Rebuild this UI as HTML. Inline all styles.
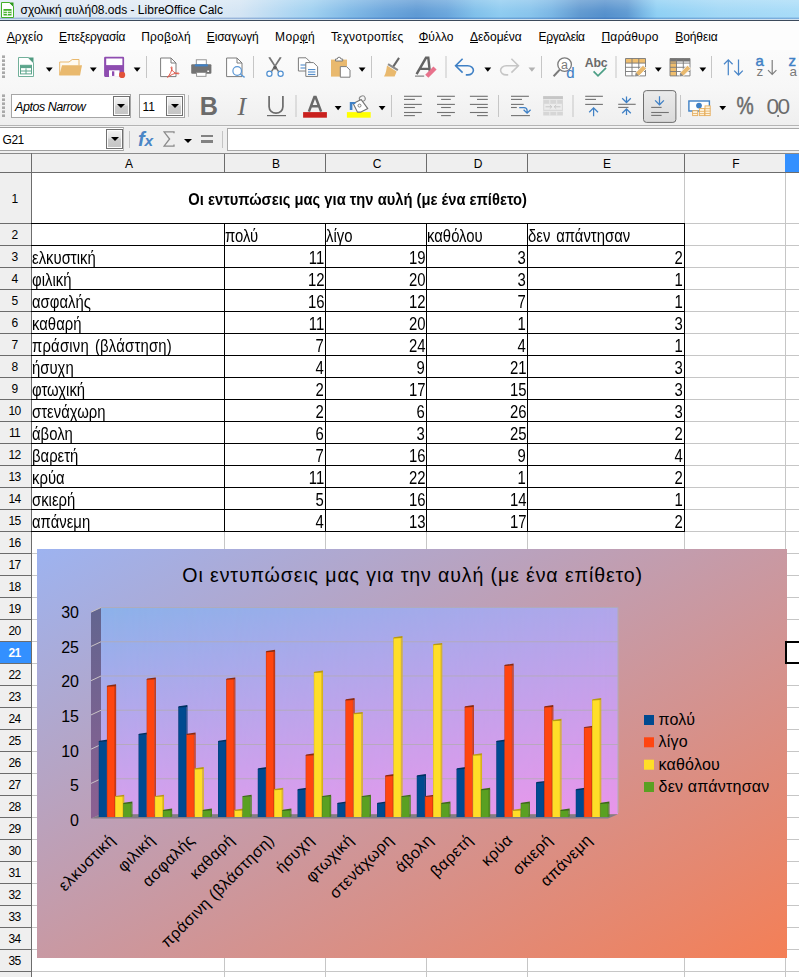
<!DOCTYPE html><html lang="el"><head><meta charset="utf-8"><title>σχολική αυλή08.ods - LibreOffice Calc</title>
<style>

html,body{margin:0;padding:0}
body{width:799px;height:977px;overflow:hidden;position:relative;background:#fff;font-family:"Liberation Sans", sans-serif;font-size:12px;color:#000}
.abs{position:absolute}
#titlebar{left:0;top:0;width:799px;height:21px;
 background:
  linear-gradient(180deg,rgba(255,255,255,.22) 0,rgba(255,255,255,.05) 45%,rgba(255,255,255,0) 70%,rgba(40,90,170,.0) 80%,rgba(40,90,170,.35) 88%,rgba(40,90,170,.35) 100%),
  linear-gradient(90deg,#dde8f3 0,#e1ebf5 180px,#d4e5f4 240px,#aed6f2 290px,#9fd0f0 312px,#80b9e6 350px,#6ba6dc 385px,#5f9ad4 417px,#6aa6dc 447px,#80c0ea 475px,#8ecbf0 500px,#88c4ec 530px,#7ab6e4 552px,#6099d0 580px,#5590cc 605px,#5f9ad2 627px,#7cbce8 645px,#8fd0f4 657px,#a2d8f6 720px,#a8dcf8 799px);}
#titlebar .edge{left:0;top:19px;width:799px;height:1px;background:#cfe0ee}
#titlebar .edge2{left:0;top:20px;width:799px;height:1px;background:#3c4a5c}
#title{left:20.5px;top:3px;font-size:12px;line-height:14px;white-space:nowrap}
#menubar{left:0;top:21px;width:799px;height:29px;background:#fdfdfd}
.mi{top:8.5px;font-size:12px;line-height:14px;white-space:nowrap}
.mi u{text-decoration:underline;text-underline-offset:1px}
#tb{left:0;top:50px;width:799px;height:75px;background:linear-gradient(180deg,#fbfbfb 0,#f7f7f7 50%,#efefef 100%)}
#tbline{left:0;top:125px;width:799px;height:1px;background:#b4b4b4}
#tbline2{left:0;top:126px;width:799px;height:1px;background:#f4f4f4}
#fbar{left:0;top:127px;width:799px;height:26px;background:#efefef}
#namebox{left:0;top:127px;width:124px;height:24px;background:#fff;border-top:1px solid #a0a0a0;border-bottom:1px solid #a0a0a0;border-right:1px solid #b8b8b8;box-sizing:border-box}
#namebox span{position:absolute;left:2.6px;top:5px;font-size:12px;line-height:14px;letter-spacing:-0.5px}
.ddb{box-sizing:border-box;border:1px solid #707070;background:linear-gradient(180deg,#f4f4f4 0,#e2e2e2 45%,#cdcdcd 50%,#c4c4c4 100%);box-shadow:inset 0 0 0 1px #fbfbfb}
.ddb i{position:absolute;left:50%;top:50%;margin:-2px 0 0 -4px;border-left:4px solid transparent;border-right:4px solid transparent;border-top:4.5px solid #000;width:0;height:0}
#finput{left:227px;top:128px;width:580px;height:23px;background:#fff;border:1px solid #a8a8a8;box-sizing:border-box}
.sep{width:1px;background:#c4c4c4}
/* sheet */
#colhdr{left:0;top:153px;width:799px;height:20px;background:#efefef;border-top:1px solid #8a8a8a;border-bottom:1px solid #6c6c6c;box-sizing:border-box}
.ch{top:155px;height:18px;line-height:18px;padding-left:1px;text-align:center;font-size:12px}
.chl{top:154px;width:1px;height:18px;background:#6c6c6c}
#rowhdr{left:0;top:173px;width:31px;height:804px;background:#efefef}
#rowhdrline{left:31px;top:153px;width:1px;height:824px;background:#6c6c6c}
.rh{left:-1px;width:31px;text-align:center;font-size:12px;line-height:14px;letter-spacing:-0.7px}
.rhl{left:0;width:31px;height:1px;background:#6c6c6c}
.gl{background:#c6c6c6}
.bl{background:#000}
.ct{white-space:nowrap;word-spacing:2px;font-size:17.5px;line-height:20px;display:inline-block}
.cl{transform:scaleX(.85);transform-origin:0 50%}
.cr{transform:scaleX(.85);transform-origin:100% 50%;text-align:right}

</style></head><body>
<div id="titlebar" class="abs"><div class="edge abs"></div><div class="edge2 abs"></div>
<svg class="abs" style="left:1px;top:2px" width="13" height="16" viewBox="0 0 13 16"><path d="M0.5 0.5H8.5L12.5 4.5V15.5H0.5Z" fill="#fff" stroke="#43b02a" stroke-width="1"/><path d="M8 0.5H12.5V5Z" fill="#2e9a1f"/><rect x="2.5" y="7" width="8" height="6.5" fill="#43b02a"/><path d="M2.5 9.3H10.5M2.5 11.4H10.5M6.4 8.8V13.5" stroke="#fff" stroke-width="0.9"/></svg>
<div id="title" class="abs">σχολική αυλή08.ods - LibreOffice Calc</div></div>
<div id="menubar" class="abs">
<div class="mi abs" style="left:6.8px;letter-spacing:0.05px"><u>Α</u>ρχείο</div>
<div class="mi abs" style="left:59.1px;letter-spacing:-0.29px"><u>Ε</u>πεξεργασία</div>
<div class="mi abs" style="left:141.2px;letter-spacing:0.22px">Προ<u>β</u>ολή</div>
<div class="mi abs" style="left:206.8px;letter-spacing:-0.17px"><u>Ε</u>ισαγωγή</div>
<div class="mi abs" style="left:275.1px;letter-spacing:0.39px">Μορ<u>φ</u>ή</div>
<div class="mi abs" style="left:330.9px;letter-spacing:0.19px">Τεχνοτροπίες</div>
<div class="mi abs" style="left:418.7px;letter-spacing:0.03px"><u>Φ</u>ύλλο</div>
<div class="mi abs" style="left:470.0px;letter-spacing:-0.02px"><u>Δ</u>εδομένα</div>
<div class="mi abs" style="left:538.5px;letter-spacing:-0.32px">Ε<u>ρ</u>γαλεία</div>
<div class="mi abs" style="left:601.6px;letter-spacing:0.09px"><u>Π</u>αράθυρο</div>
<div class="mi abs" style="left:675.3px;letter-spacing:-0.11px"><u>Β</u>οήθεια</div>
</div>
<div id="tb" class="abs"></div><div id="tbline" class="abs"></div><div id="tbline2" class="abs"></div>
<svg class="abs" style="left:0;top:50px" width="799" height="76" viewBox="0 50 799 76" font-family="'Liberation Sans', sans-serif">
<rect x="2" y="55.4" width="3" height="2.6" fill="#a9a9a9"/><rect x="2" y="59.4" width="3" height="2.6" fill="#a9a9a9"/><rect x="2" y="63.4" width="3" height="2.6" fill="#a9a9a9"/><rect x="2" y="67.4" width="3" height="2.6" fill="#a9a9a9"/><rect x="2" y="71.4" width="3" height="2.6" fill="#a9a9a9"/><rect x="2" y="75.4" width="3" height="2.6" fill="#a9a9a9"/>
<path d="M18.5 57.5H28.2L33.5 62.8V76.5H18.5Z" fill="#fff" stroke="#72b09a" stroke-width="1"/>
<path d="M28 57.5H33.5V63Z" fill="#4f9a80"/>
<rect x="20.5" y="65.3" width="11" height="8.6" fill="#fff" stroke="#5da58c" stroke-width="1"/><rect x="20.5" y="65.3" width="11" height="2.8" fill="#5da58c"/><path d="M20.5 71H31.5M26 68.3V74" stroke="#5da58c" stroke-width="1"/>
<path d="M45.9 67.4h6.8l-3.4 4.3z" fill="#000"/>
<path d="M59.7 75V62H69L72.2 59.5H79V65.5" fill="#fffaf0" stroke="#e9b96e" stroke-width="1"/>
<path d="M59.2 75.6L62 65.3H82L80 75.6Z" fill="#e9b96e"/>
<path d="M89.9 67.4h6.8l-3.4 4.3z" fill="#000"/>
<path d="M105.2 56.8H123A1.1 1.1 0 0 1 124.1 57.9V75.8A1.1 1.1 0 0 1 123 76.9H105.2A1.1 1.1 0 0 1 104.1 75.8V57.9A1.1 1.1 0 0 1 105.2 56.8Z" fill="#8e4db0"/>
<rect x="106.2" y="58.5" width="16.2" height="6.6" fill="#fff"/>
<rect x="109" y="70.3" width="10.5" height="6.6" fill="#fff"/><rect x="112" y="71.3" width="2.3" height="4.6" fill="#8e4db0"/>
<circle cx="122.1" cy="74.9" r="3.1" fill="#e2533a"/>
<path d="M133.7 67.4h6.8l-3.4 4.3z" fill="#000"/>
<rect x="146" y="56" width="1" height="22" fill="#c6c6c6"/>
<path d="M160.6 58H171L176 63V76.6H160.6Z" fill="#fff" stroke="#7c7c7c" stroke-width="1"/><path d="M171 58V63H176" fill="none" stroke="#7c7c7c" stroke-width="1"/>
<path d="M167.5 77.4C170 74.5 172.3 70 172 67.6C171.8 66.3 170.9 66.6 171.1 67.9C171.7 71 175 73.6 178.2 73.9C179.4 74 179.3 73 178.1 73C175 73 170.5 74.8 167.5 77.4Z" fill="none" stroke="#e0584a" stroke-width="1"/>
<rect x="196.3" y="59.8" width="10" height="5.5" fill="#fff" stroke="#8a8a8a" stroke-width="0.9"/>
<rect x="191.2" y="64.3" width="20.2" height="9.5" rx="1" fill="#737373"/><rect x="194.8" y="64.3" width="13" height="2.1" fill="#3f80c5"/><rect x="207.3" y="70.5" width="1.8" height="1.5" fill="#fff"/>
<rect x="196.6" y="72.4" width="9.4" height="3.9" fill="#fff" stroke="#8a8a8a" stroke-width="0.9"/>
<path d="M226.6 58H237L242 63V76.6H226.6Z" fill="#fff" stroke="#7c7c7c" stroke-width="1"/><path d="M237 58V63H242" fill="none" stroke="#7c7c7c" stroke-width="1"/>
<circle cx="237.2" cy="71" r="4.3" fill="#fff" stroke="#5b98d6" stroke-width="1.2"/><path d="M240.4 74.2L244.6 77.4" stroke="#5b98d6" stroke-width="1.4"/>
<rect x="253" y="56" width="1" height="22" fill="#c6c6c6"/>
<path d="M268.3 57.6L270.2 57.1L279.2 71.2L277.9 72ZM281.7 57.6L279.8 57.1L270.8 71.2L272.1 72Z" fill="#767676"/>
<path d="M275 64.4L277 67.6L275 70L273 67.6Z" fill="#5c5c5c"/>
<circle cx="269.4" cy="73.8" r="2.6" fill="#fff" stroke="#4f8fd0" stroke-width="1.2"/><circle cx="280.6" cy="73.8" r="2.6" fill="#fff" stroke="#4f8fd0" stroke-width="1.2"/>
<path d="M298.4 57.8H306L310 61.8V71H298.4Z" fill="#fff" stroke="#7c7c7c" stroke-width="1"/><path d="M300.5 65H306M300.5 68H306" stroke="#3f80c5" stroke-width="1"/>
<path d="M305.8 62.6H313.5L317.6 66.7V76.4H305.8Z" fill="#fff" stroke="#7c7c7c" stroke-width="1"/><path d="M308 69.6H315.4M308 72H315.4M308 74.4H315.4" stroke="#3f80c5" stroke-width="1"/>
<rect x="331" y="59.6" width="16" height="17" fill="#e9b96e"/>
<path d="M335.5 61V59H337.3A1.8 1.8 0 0 1 340.9 59H342.7V61Z" fill="#fff" stroke="#7c7c7c" stroke-width="1"/>
<path d="M340.3 66.6H346.5L350 70.1V77.2H340.3Z" fill="#fff" stroke="#7c7c7c" stroke-width="1"/>
<path d="M358.7 67.4h6.8l-3.4 4.3z" fill="#000"/>
<rect x="371" y="56" width="1" height="22" fill="#c6c6c6"/>
<path d="M398.2 57.3L399.9 58.4L393.4 68.2L391.7 67.1Z" fill="#666"/>
<path d="M388.6 63.2L398.4 69.3L397.3 71L387.5 64.9Z" fill="#8c8c8c"/>
<path d="M387 65.6L396.6 71.6C395.8 73.6 395.2 75.2 394.6 76.6H384C386 73.4 386.5 69.4 387 65.6Z" fill="#e9b96e"/>
<path d="M416.6 74.2L426 57.8H428.3L429.8 71.5M420.4 68.9H429.4" fill="none" stroke="#646464" stroke-width="2.4"/><path d="M415 76.1H424.2" stroke="#6a6a6a" stroke-width="1"/>
<path d="M425.2 74.8L433.4 66.4L436.6 69.4L428.4 77.8Z" fill="#e8728c"/>
<rect x="445.5" y="56" width="1" height="22" fill="#c6c6c6"/>
<path d="M462.6 58.8L455.6 65.7L462.6 72.6M456 65.7H467.8A5.6 4.6 0 0 1 467.8 74.9H465.8" fill="none" stroke="#3f80c5" stroke-width="1.6"/>
<path d="M484.4 67.4h6.8l-3.4 4.3z" fill="#000"/>
<path d="M511.4 58.8L518.4 65.7L511.4 72.6M518 65.7H506.2A5.6 4.6 0 0 0 506.2 74.9H508.2" fill="none" stroke="#c6c6c6" stroke-width="1.6"/>
<path d="M528.5 67.4h6.8l-3.4 4.3z" fill="#b2b2b2"/>
<rect x="541" y="56" width="1" height="22" fill="#c6c6c6"/>
<circle cx="564.6" cy="64.6" r="6.8" fill="#fff" stroke="#7a7a7a" stroke-width="1.3"/><path d="M559.8 69.6L553.6 76.2" stroke="#7a7a7a" stroke-width="2"/>
<text x="561" y="69" font-size="12.5" fill="#7a7a7a">a</text><text x="566.2" y="77.6" font-size="15" fill="#3f80c5" stroke="#3f80c5" stroke-width="0.1">d</text>
<text x="584.8" y="67" font-size="12.3" font-weight="bold" fill="#6a6a6a" letter-spacing="-0.25">Abc</text>
<path d="M593.6 71.4L598 75.8L606 67.8" fill="none" stroke="#4c9f86" stroke-width="1.7"/>
<rect x="615.5" y="56" width="1" height="22" fill="#c6c6c6"/>
<rect x="625.5" y="58.5" width="20" height="17.4" fill="#fff"/><rect x="625.5" y="58.5" width="20" height="4.6" fill="#efbe6e"/><path d="M625.5 58.5h20v17.4h-20zM625.5 63.1h20M625.5 67.3h20M625.5 71.5h20M632 58.5v17.4M638.8 58.5v17.4" fill="none" stroke="#787878" stroke-width="0.9"/><path d="M635.8 72.4l7.2-7.2 3.4 3.4-7.2 7.2-4.2 0.8z" fill="#e9b96e" stroke="#fafafa" stroke-width="0.9"/><path d="M634.9 76.6l0.9-4 3.2 3.2z" fill="#8a8a8a"/>
<path d="M654.9 67.4h6.8l-3.4 4.3z" fill="#000"/>
<rect x="670" y="58.5" width="20" height="17.4" fill="#fff"/><rect x="670" y="58.5" width="6.5" height="17.4" fill="#efbe6e"/><rect x="670" y="58.5" width="20" height="3" fill="#737373"/><path d="M670 58.5h20v17.4h-20zM670 63.1h20M670 67.3h20M670 71.5h20M676.5 58.5v17.4M683.3 58.5v17.4" fill="none" stroke="#787878" stroke-width="0.9"/><path d="M680.3 72.4l7.2-7.2 3.4 3.4-7.2 7.2-4.2 0.8z" fill="#e9b96e" stroke="#fafafa" stroke-width="0.9"/><path d="M679.4 76.6l0.9-4 3.2 3.2z" fill="#8a8a8a"/>
<path d="M699.4 67.4h6.8l-3.4 4.3z" fill="#000"/>
<rect x="711" y="56" width="1" height="22" fill="#c6c6c6"/>
<path d="M728.3 75.2V59.8M724 64.2L728.3 59.8L732.6 64.2M738.5 59.6V75M734.2 70.6L738.5 75L742.8 70.6" fill="none" stroke="#4a86c8" stroke-width="1.25"/>
<text x="755.6" y="66.4" font-size="15" fill="#3f80c5" stroke="#3f80c5" stroke-width="0.45">a</text><text x="756.6" y="76.2" font-size="13.4" fill="#7a7a7a">z</text>
<path d="M772.2 60V74.4M768 70.2L772.2 74.4L776.4 70.2" fill="none" stroke="#7e7e7e" stroke-width="1.2"/>
<text x="788.6" y="66.4" font-size="15" fill="#3f80c5" stroke="#3f80c5" stroke-width="0.45">z</text><text x="789.4" y="76.2" font-size="13.4" fill="#7a7a7a">a</text>
<rect x="2" y="94.4" width="3" height="2.6" fill="#a9a9a9"/><rect x="2" y="98.4" width="3" height="2.6" fill="#a9a9a9"/><rect x="2" y="102.4" width="3" height="2.6" fill="#a9a9a9"/><rect x="2" y="106.4" width="3" height="2.6" fill="#a9a9a9"/><rect x="2" y="110.4" width="3" height="2.6" fill="#a9a9a9"/><rect x="2" y="114.4" width="3" height="2.6" fill="#a9a9a9"/>
<rect x="188" y="95" width="1" height="22" fill="#c6c6c6"/>
<text x="199.8" y="115" font-size="26" font-weight="bold" fill="#6b6b6b" textLength="18.2" lengthAdjust="spacingAndGlyphs">B</text>
<text x="237.5" y="115" font-size="26" font-style="italic" font-family="'Liberation Serif', serif" fill="#6b6b6b">I</text>
<path d="M269.1 96V106.8A6.9 6.4 0 0 0 282.9 106.8V96" fill="none" stroke="#6b6b6b" stroke-width="1.7"/><rect x="267" y="115" width="19" height="1.2" fill="#6b6b6b"/>
<rect x="295.5" y="95" width="1" height="22" fill="#c6c6c6"/>
<path d="M308.9 111.6L314.4 97H315.6L321.1 111.6M310.9 106.3H319.1" fill="none" stroke="#6a6a6a" stroke-width="2.5" stroke-linejoin="miter"/><rect x="303.1" y="112.1" width="23.8" height="5.6" fill="#c9211e"/>
<path d="M334.7 106h6.8l-3.4 4.3z" fill="#000"/>
<rect x="346.9" y="112.1" width="23.8" height="5.6" fill="#ffff00"/>
<ellipse cx="362.3" cy="98.7" rx="3" ry="2.7" fill="none" stroke="#8a8a8a" stroke-width="1" transform="rotate(-25 362.3 98.7)"/>
<path d="M353.2 103.6L361.2 99.6L367.8 108.6L361 112.1H357.4Z" fill="#fff" stroke="#727272" stroke-width="1.1" stroke-linejoin="round"/>
<circle cx="359.5" cy="105.6" r="1.5" fill="#fff" stroke="#727272" stroke-width="0.9"/>
<path d="M349.8 110V101.9H355.4V103.9H352.4V110Z" fill="#3f80c5"/>
<path d="M378.7 106h6.8l-3.4 4.3z" fill="#000"/>
<rect x="391" y="95" width="1" height="22" fill="#c6c6c6"/>
<rect x="404" y="95.75" width="17.8" height="1.1" fill="#727272"/>
<rect x="437" y="95.75" width="17.9" height="1.1" fill="#727272"/>
<rect x="469.9" y="95.75" width="17.9" height="1.1" fill="#727272"/>
<rect x="404" y="98.85" width="10.9" height="1.1" fill="#727272"/>
<rect x="441.1" y="98.85" width="9.7" height="1.1" fill="#727272"/>
<rect x="477" y="98.85" width="10.8" height="1.1" fill="#727272"/>
<rect x="404" y="103.85" width="17.8" height="1.1" fill="#727272"/>
<rect x="437" y="103.85" width="17.9" height="1.1" fill="#727272"/>
<rect x="469.9" y="103.85" width="17.9" height="1.1" fill="#727272"/>
<rect x="404" y="106.95" width="10.9" height="1.1" fill="#727272"/>
<rect x="441.1" y="106.95" width="9.7" height="1.1" fill="#727272"/>
<rect x="477" y="106.95" width="10.8" height="1.1" fill="#727272"/>
<rect x="404" y="111.95" width="17.8" height="1.1" fill="#727272"/>
<rect x="437" y="111.95" width="17.9" height="1.1" fill="#727272"/>
<rect x="469.9" y="111.95" width="17.9" height="1.1" fill="#727272"/>
<rect x="404" y="115.05" width="10.9" height="1.1" fill="#727272"/>
<rect x="441.1" y="115.05" width="9.7" height="1.1" fill="#727272"/>
<rect x="477" y="115.05" width="10.8" height="1.1" fill="#727272"/>
<rect x="498" y="95" width="1" height="22" fill="#c6c6c6"/>
<rect x="511" y="95.75" width="17.9" height="1.1" fill="#727272"/>
<rect x="511" y="98.85" width="11" height="1.1" fill="#727272"/>
<rect x="511" y="103.85" width="12.7" height="1.1" fill="#727272"/>
<rect x="511" y="106.95" width="5.8" height="1.1" fill="#727272"/>
<rect x="511" y="115.05" width="18.9" height="1.1" fill="#727272"/>
<path d="M519.2 107.5H524A3.1 3.1 0 0 1 527.1 110.6V112.8M523.6 109.8L527.1 113.2L530.6 109.8" fill="none" stroke="#3f80c5" stroke-width="1.25"/>
<rect x="543.2" y="96.2" width="19.7" height="19.3" fill="#d6d6d6"/><rect x="543.2" y="96.2" width="19.7" height="3" fill="#c6c6c6"/>
<rect x="544.2" y="103.8" width="17.7" height="6" fill="#ececec"/>
<path d="M543.2 99.6H562.9M543.2 111.4H562.9M549.8 99.6V103.8M556.7 99.6V103.8M549.8 111.4V115.5M556.7 111.4V115.5" stroke="#ececec" stroke-width="0.9" fill="none"/>
<path d="M545.5 106.8H551.5M554.5 106.8H560.5M549.8 105L551.8 106.8L549.8 108.6M556.2 105L554.2 106.8L556.2 108.6" fill="none" stroke="#c4c4c4" stroke-width="0.9"/>
<rect x="572.5" y="95" width="1" height="22" fill="#c6c6c6"/>
<rect x="585.2" y="95.75" width="17.7" height="1.1" fill="#727272"/>
<rect x="585.2" y="98.85" width="10.8" height="1.1" fill="#727272"/>
<rect x="585.2" y="103.85" width="17.7" height="1.1" fill="#727272"/>
<path d="M593.6 116.2V107.9M589.2 112.2L593.6 107.8L598 112.2" fill="none" stroke="#3f80c5" stroke-width="1.25"/>
<rect x="618.2" y="103.75" width="17.5" height="1.1" fill="#727272"/>
<rect x="618.2" y="106.85" width="10.3" height="1.1" fill="#727272"/>
<path d="M626.5 96.5V102.2M622.2 98.2L626.5 102.5L630.8 98.2M626.5 114.9V109.3M622.2 113.3L626.5 109L630.8 113.3" fill="none" stroke="#3f80c5" stroke-width="1.25"/>
<defs><linearGradient id="gpr" x1="0" y1="0" x2="0" y2="1"><stop offset="0" stop-color="#ebebeb"/><stop offset="1" stop-color="#dadada"/></linearGradient></defs>
<rect x="643.5" y="90.6" width="32.4" height="31.8" rx="3" fill="url(#gpr)" stroke="#6e6e6e" stroke-width="1"/>
<rect x="651.2" y="106.85" width="10.4" height="1.1" fill="#727272"/>
<rect x="651.2" y="111.95" width="17.6" height="1.1" fill="#727272"/>
<rect x="651.2" y="114.85" width="10.4" height="1.1" fill="#727272"/>
<path d="M659.5 96.3V104.5M655.1 100.4L659.5 104.8L663.9 100.4" fill="none" stroke="#3f80c5" stroke-width="1.25"/>
<rect x="680" y="95" width="1" height="22" fill="#c6c6c6"/>
<rect x="688.9" y="101" width="20.5" height="10" fill="#fff" stroke="#3f80c5" stroke-width="1.4"/><circle cx="699" cy="105.6" r="2.9" fill="#3f80c5"/>
<rect x="692.6" y="110.7" width="5.1" height="4.9" fill="#fdf3de" stroke="#e6ae5e" stroke-width="0.9"/>
<rect x="692.6" y="113.1" width="5.1" height="0.8" fill="#e6ae5e"/>
<rect x="699.4" y="108.5" width="5.2" height="7.1" fill="#fdf3de" stroke="#e6ae5e" stroke-width="0.9"/>
<rect x="699.4" y="110.9" width="5.2" height="0.8" fill="#e6ae5e"/>
<rect x="699.4" y="113.3" width="5.2" height="0.8" fill="#e6ae5e"/>
<rect x="705" y="105.9" width="5.2" height="9.7" fill="#fdf3de" stroke="#e6ae5e" stroke-width="0.9"/>
<rect x="705" y="108.3" width="5.2" height="0.8" fill="#e6ae5e"/>
<rect x="705" y="110.7" width="5.2" height="0.8" fill="#e6ae5e"/>
<rect x="705" y="113.1" width="5.2" height="0.8" fill="#e6ae5e"/>
<path d="M719.3 106h6.8l-3.4 4.3z" fill="#000"/>
<text x="736.6" y="114.4" font-size="23.5" fill="#6b6b6b" stroke="#6b6b6b" stroke-width="0.5" textLength="17.2" lengthAdjust="spacingAndGlyphs">%</text>
<text x="766.4" y="114.4" font-size="22.6" fill="#6b6b6b" textLength="23.6" lengthAdjust="spacing">00</text><rect x="777.3" y="115.2" width="1.5" height="1.6" fill="#444"/>
</svg>
<div class="abs" style="left:11px;top:94px;width:120px;height:24px;box-sizing:border-box;border:1px solid #a6a6a6;background:#fff"></div>
<div class="abs" style="left:15px;top:100px;font-size:12.5px;line-height:14px;font-style:italic;white-space:nowrap;letter-spacing:-0.45px">Aptos Narrow</div>
<div class="abs ddb" style="left:112.5px;top:96px;width:17px;height:20px"><i></i></div>
<div class="abs" style="left:139px;top:94px;width:46px;height:24px;box-sizing:border-box;border:1px solid #a6a6a6;background:#fff"></div>
<div class="abs" style="left:142.5px;top:100px;font-size:12px;line-height:14px">11</div>
<div class="abs ddb" style="left:166px;top:96px;width:17px;height:20px"><i></i></div>
<div id="fbar" class="abs"></div>
<div id="namebox" class="abs"><span>G21</span></div>
<div class="abs ddb" style="left:106px;top:129px;width:17px;height:20px"><i></i></div>
<div class="abs sep" style="left:129px;top:131px;height:17px"></div>
<div class="abs" style="left:138px;top:127px;font:italic bold 20px/24px 'Liberation Sans',sans-serif;color:#4a86c6;letter-spacing:-0.3px">f<span style="font-size:15.5px">x</span></div>
<svg class="abs" style="left:163px;top:131px" width="12" height="16" viewBox="0 0 12 16"><path d="M11 2.2V0.8H1L6.6 8L1 15.2H11V13.6" fill="none" stroke="#8a8a8a" stroke-width="1.3"/></svg>
<div class="abs" style="left:184px;top:139px;width:0;height:0;border-left:4px solid transparent;border-right:4px solid transparent;border-top:4.5px solid #000"></div>
<div class="abs" style="left:201px;top:134.5px;width:12px;height:2.5px;background:#828282"></div><div class="abs" style="left:201px;top:140px;width:12px;height:2.5px;background:#828282"></div>
<div class="abs sep" style="left:222px;top:131px;height:17px"></div>
<div id="finput" class="abs"></div>
<div id="colhdr" class="abs"></div><div id="rowhdr" class="abs"></div>
<div class="ch abs" style="left:32px;width:192px">A</div>
<div class="chl abs" style="left:224px"></div>
<div class="ch abs" style="left:225px;width:100px">B</div>
<div class="chl abs" style="left:325px"></div>
<div class="ch abs" style="left:326px;width:100px">C</div>
<div class="chl abs" style="left:426px"></div>
<div class="ch abs" style="left:427px;width:100px">D</div>
<div class="chl abs" style="left:527px"></div>
<div class="ch abs" style="left:528px;width:156px">E</div>
<div class="chl abs" style="left:684px"></div>
<div class="ch abs" style="left:685px;width:100px">F</div>
<div class="chl abs" style="left:785px"></div>
<div class="abs" style="left:785px;top:154px;width:14px;height:18px;background:#3390ff"></div>
<div class="gl abs" style="left:32px;top:223px;width:767px;height:1px"></div>
<div class="gl abs" style="left:32px;top:245px;width:767px;height:1px"></div>
<div class="gl abs" style="left:32px;top:267px;width:767px;height:1px"></div>
<div class="gl abs" style="left:32px;top:289px;width:767px;height:1px"></div>
<div class="gl abs" style="left:32px;top:311px;width:767px;height:1px"></div>
<div class="gl abs" style="left:32px;top:333px;width:767px;height:1px"></div>
<div class="gl abs" style="left:32px;top:355px;width:767px;height:1px"></div>
<div class="gl abs" style="left:32px;top:377px;width:767px;height:1px"></div>
<div class="gl abs" style="left:32px;top:399px;width:767px;height:1px"></div>
<div class="gl abs" style="left:32px;top:421px;width:767px;height:1px"></div>
<div class="gl abs" style="left:32px;top:443px;width:767px;height:1px"></div>
<div class="gl abs" style="left:32px;top:465px;width:767px;height:1px"></div>
<div class="gl abs" style="left:32px;top:487px;width:767px;height:1px"></div>
<div class="gl abs" style="left:32px;top:509px;width:767px;height:1px"></div>
<div class="gl abs" style="left:32px;top:531px;width:767px;height:1px"></div>
<div class="gl abs" style="left:32px;top:553px;width:767px;height:1px"></div>
<div class="gl abs" style="left:32px;top:575px;width:767px;height:1px"></div>
<div class="gl abs" style="left:32px;top:597px;width:767px;height:1px"></div>
<div class="gl abs" style="left:32px;top:619px;width:767px;height:1px"></div>
<div class="gl abs" style="left:32px;top:641px;width:767px;height:1px"></div>
<div class="gl abs" style="left:32px;top:663px;width:767px;height:1px"></div>
<div class="gl abs" style="left:32px;top:685px;width:767px;height:1px"></div>
<div class="gl abs" style="left:32px;top:707px;width:767px;height:1px"></div>
<div class="gl abs" style="left:32px;top:729px;width:767px;height:1px"></div>
<div class="gl abs" style="left:32px;top:751px;width:767px;height:1px"></div>
<div class="gl abs" style="left:32px;top:773px;width:767px;height:1px"></div>
<div class="gl abs" style="left:32px;top:795px;width:767px;height:1px"></div>
<div class="gl abs" style="left:32px;top:817px;width:767px;height:1px"></div>
<div class="gl abs" style="left:32px;top:839px;width:767px;height:1px"></div>
<div class="gl abs" style="left:32px;top:861px;width:767px;height:1px"></div>
<div class="gl abs" style="left:32px;top:883px;width:767px;height:1px"></div>
<div class="gl abs" style="left:32px;top:905px;width:767px;height:1px"></div>
<div class="gl abs" style="left:32px;top:927px;width:767px;height:1px"></div>
<div class="gl abs" style="left:32px;top:949px;width:767px;height:1px"></div>
<div class="gl abs" style="left:32px;top:971px;width:767px;height:1px"></div>
<div class="gl abs" style="left:224px;top:224px;width:1px;height:753px"></div>
<div class="gl abs" style="left:325px;top:224px;width:1px;height:753px"></div>
<div class="gl abs" style="left:426px;top:224px;width:1px;height:753px"></div>
<div class="gl abs" style="left:527px;top:224px;width:1px;height:753px"></div>
<div class="gl abs" style="left:684px;top:173px;width:1px;height:804px"></div>
<div class="gl abs" style="left:785px;top:173px;width:1px;height:804px"></div>
<div class="rh abs" style="top:191.8px;">1</div>
<div class="rhl abs" style="top:223px"></div>
<div class="rh abs" style="top:228.3px;">2</div>
<div class="rhl abs" style="top:245px"></div>
<div class="rh abs" style="top:250.3px;">3</div>
<div class="rhl abs" style="top:267px"></div>
<div class="rh abs" style="top:272.3px;">4</div>
<div class="rhl abs" style="top:289px"></div>
<div class="rh abs" style="top:294.3px;">5</div>
<div class="rhl abs" style="top:311px"></div>
<div class="rh abs" style="top:316.3px;">6</div>
<div class="rhl abs" style="top:333px"></div>
<div class="rh abs" style="top:338.3px;">7</div>
<div class="rhl abs" style="top:355px"></div>
<div class="rh abs" style="top:360.3px;">8</div>
<div class="rhl abs" style="top:377px"></div>
<div class="rh abs" style="top:382.3px;">9</div>
<div class="rhl abs" style="top:399px"></div>
<div class="rh abs" style="top:404.3px;">10</div>
<div class="rhl abs" style="top:421px"></div>
<div class="rh abs" style="top:426.3px;">11</div>
<div class="rhl abs" style="top:443px"></div>
<div class="rh abs" style="top:448.3px;">12</div>
<div class="rhl abs" style="top:465px"></div>
<div class="rh abs" style="top:470.3px;">13</div>
<div class="rhl abs" style="top:487px"></div>
<div class="rh abs" style="top:492.3px;">14</div>
<div class="rhl abs" style="top:509px"></div>
<div class="rh abs" style="top:514.3px;">15</div>
<div class="rhl abs" style="top:531px"></div>
<div class="rh abs" style="top:536.3px;">16</div>
<div class="rhl abs" style="top:553px"></div>
<div class="rh abs" style="top:558.3px;">17</div>
<div class="rhl abs" style="top:575px"></div>
<div class="rh abs" style="top:580.3px;">18</div>
<div class="rhl abs" style="top:597px"></div>
<div class="rh abs" style="top:602.3px;">19</div>
<div class="rhl abs" style="top:619px"></div>
<div class="rh abs" style="top:624.3px;">20</div>
<div class="rhl abs" style="top:641px"></div>
<div class="abs" style="left:0;top:642px;width:31px;height:21px;background:#3390ff"></div>
<div class="rh abs" style="top:646.3px;color:#fff;font-weight:bold;">21</div>
<div class="rhl abs" style="top:663px"></div>
<div class="rh abs" style="top:668.3px;">22</div>
<div class="rhl abs" style="top:685px"></div>
<div class="rh abs" style="top:690.3px;">23</div>
<div class="rhl abs" style="top:707px"></div>
<div class="rh abs" style="top:712.3px;">24</div>
<div class="rhl abs" style="top:729px"></div>
<div class="rh abs" style="top:734.3px;">25</div>
<div class="rhl abs" style="top:751px"></div>
<div class="rh abs" style="top:756.3px;">26</div>
<div class="rhl abs" style="top:773px"></div>
<div class="rh abs" style="top:778.3px;">27</div>
<div class="rhl abs" style="top:795px"></div>
<div class="rh abs" style="top:800.3px;">28</div>
<div class="rhl abs" style="top:817px"></div>
<div class="rh abs" style="top:822.3px;">29</div>
<div class="rhl abs" style="top:839px"></div>
<div class="rh abs" style="top:844.3px;">30</div>
<div class="rhl abs" style="top:861px"></div>
<div class="rh abs" style="top:866.3px;">31</div>
<div class="rhl abs" style="top:883px"></div>
<div class="rh abs" style="top:888.3px;">32</div>
<div class="rhl abs" style="top:905px"></div>
<div class="rh abs" style="top:910.3px;">33</div>
<div class="rhl abs" style="top:927px"></div>
<div class="rh abs" style="top:932.3px;">34</div>
<div class="rhl abs" style="top:949px"></div>
<div class="rh abs" style="top:954.3px;">35</div>
<div class="rhl abs" style="top:971px"></div>
<div class="rh abs" style="top:976.3px;">36</div>
<div class="rhl abs" style="top:993px"></div>
<div id="rowhdrline" class="abs"></div>
<div class="bl abs" style="left:31px;top:223px;width:654px;height:1px"></div>
<div class="bl abs" style="left:31px;top:245px;width:654px;height:1px"></div>
<div class="bl abs" style="left:31px;top:267px;width:654px;height:1px"></div>
<div class="bl abs" style="left:31px;top:289px;width:654px;height:1px"></div>
<div class="bl abs" style="left:31px;top:311px;width:654px;height:1px"></div>
<div class="bl abs" style="left:31px;top:333px;width:654px;height:1px"></div>
<div class="bl abs" style="left:31px;top:355px;width:654px;height:1px"></div>
<div class="bl abs" style="left:31px;top:377px;width:654px;height:1px"></div>
<div class="bl abs" style="left:31px;top:399px;width:654px;height:1px"></div>
<div class="bl abs" style="left:31px;top:421px;width:654px;height:1px"></div>
<div class="bl abs" style="left:31px;top:443px;width:654px;height:1px"></div>
<div class="bl abs" style="left:31px;top:465px;width:654px;height:1px"></div>
<div class="bl abs" style="left:31px;top:487px;width:654px;height:1px"></div>
<div class="bl abs" style="left:31px;top:509px;width:654px;height:1px"></div>
<div class="bl abs" style="left:31px;top:531px;width:654px;height:1px"></div>
<div class="bl abs" style="left:224px;top:223px;width:1px;height:309px"></div>
<div class="bl abs" style="left:325px;top:223px;width:1px;height:309px"></div>
<div class="bl abs" style="left:426px;top:223px;width:1px;height:309px"></div>
<div class="bl abs" style="left:527px;top:223px;width:1px;height:309px"></div>
<div class="bl abs" style="left:684px;top:223px;width:1px;height:309px"></div>
<div class="abs" style="left:32px;top:173px;width:652px;height:50px;text-align:center"><span id="t1" style="display:inline-block;white-space:nowrap;font-weight:bold;font-size:16.5px;line-height:20px;margin-top:16px;transform:scaleX(.893);transform-origin:50%% 50%%">Οι εντυπώσεις μας για την αυλή (με ένα επίθετο)</span></div>
<div class="abs" style="left:225px;top:225.5px"><span class="ct cl">πολύ</span></div>
<div class="abs" style="left:326px;top:225.5px"><span class="ct cl">λίγο</span></div>
<div class="abs" style="left:427px;top:225.5px"><span class="ct cl">καθόλου</span></div>
<div class="abs" style="left:528px;top:225.5px"><span class="ct cl">δεν απάντησαν</span></div>
<div class="abs" style="left:32px;top:247.5px"><span class="ct cl">ελκυστική</span></div>
<div class="abs" style="left:264px;top:247.5px;width:60px;text-align:right"><span class="ct cr">11</span></div>
<div class="abs" style="left:365px;top:247.5px;width:60px;text-align:right"><span class="ct cr">19</span></div>
<div class="abs" style="left:466px;top:247.5px;width:60px;text-align:right"><span class="ct cr">3</span></div>
<div class="abs" style="left:623px;top:247.5px;width:60px;text-align:right"><span class="ct cr">2</span></div>
<div class="abs" style="left:32px;top:269.5px"><span class="ct cl">φιλική</span></div>
<div class="abs" style="left:264px;top:269.5px;width:60px;text-align:right"><span class="ct cr">12</span></div>
<div class="abs" style="left:365px;top:269.5px;width:60px;text-align:right"><span class="ct cr">20</span></div>
<div class="abs" style="left:466px;top:269.5px;width:60px;text-align:right"><span class="ct cr">3</span></div>
<div class="abs" style="left:623px;top:269.5px;width:60px;text-align:right"><span class="ct cr">1</span></div>
<div class="abs" style="left:32px;top:291.5px"><span class="ct cl">ασφαλής</span></div>
<div class="abs" style="left:264px;top:291.5px;width:60px;text-align:right"><span class="ct cr">16</span></div>
<div class="abs" style="left:365px;top:291.5px;width:60px;text-align:right"><span class="ct cr">12</span></div>
<div class="abs" style="left:466px;top:291.5px;width:60px;text-align:right"><span class="ct cr">7</span></div>
<div class="abs" style="left:623px;top:291.5px;width:60px;text-align:right"><span class="ct cr">1</span></div>
<div class="abs" style="left:32px;top:313.5px"><span class="ct cl">καθαρή</span></div>
<div class="abs" style="left:264px;top:313.5px;width:60px;text-align:right"><span class="ct cr">11</span></div>
<div class="abs" style="left:365px;top:313.5px;width:60px;text-align:right"><span class="ct cr">20</span></div>
<div class="abs" style="left:466px;top:313.5px;width:60px;text-align:right"><span class="ct cr">1</span></div>
<div class="abs" style="left:623px;top:313.5px;width:60px;text-align:right"><span class="ct cr">3</span></div>
<div class="abs" style="left:32px;top:335.5px"><span class="ct cl" style="letter-spacing:0.23px">πράσινη (βλάστηση)</span></div>
<div class="abs" style="left:264px;top:335.5px;width:60px;text-align:right"><span class="ct cr">7</span></div>
<div class="abs" style="left:365px;top:335.5px;width:60px;text-align:right"><span class="ct cr">24</span></div>
<div class="abs" style="left:466px;top:335.5px;width:60px;text-align:right"><span class="ct cr">4</span></div>
<div class="abs" style="left:623px;top:335.5px;width:60px;text-align:right"><span class="ct cr">1</span></div>
<div class="abs" style="left:32px;top:357.5px"><span class="ct cl">ήσυχη</span></div>
<div class="abs" style="left:264px;top:357.5px;width:60px;text-align:right"><span class="ct cr">4</span></div>
<div class="abs" style="left:365px;top:357.5px;width:60px;text-align:right"><span class="ct cr">9</span></div>
<div class="abs" style="left:466px;top:357.5px;width:60px;text-align:right"><span class="ct cr">21</span></div>
<div class="abs" style="left:623px;top:357.5px;width:60px;text-align:right"><span class="ct cr">3</span></div>
<div class="abs" style="left:32px;top:379.5px"><span class="ct cl">φτωχική</span></div>
<div class="abs" style="left:264px;top:379.5px;width:60px;text-align:right"><span class="ct cr">2</span></div>
<div class="abs" style="left:365px;top:379.5px;width:60px;text-align:right"><span class="ct cr">17</span></div>
<div class="abs" style="left:466px;top:379.5px;width:60px;text-align:right"><span class="ct cr">15</span></div>
<div class="abs" style="left:623px;top:379.5px;width:60px;text-align:right"><span class="ct cr">3</span></div>
<div class="abs" style="left:32px;top:401.5px"><span class="ct cl">στενάχωρη</span></div>
<div class="abs" style="left:264px;top:401.5px;width:60px;text-align:right"><span class="ct cr">2</span></div>
<div class="abs" style="left:365px;top:401.5px;width:60px;text-align:right"><span class="ct cr">6</span></div>
<div class="abs" style="left:466px;top:401.5px;width:60px;text-align:right"><span class="ct cr">26</span></div>
<div class="abs" style="left:623px;top:401.5px;width:60px;text-align:right"><span class="ct cr">3</span></div>
<div class="abs" style="left:32px;top:423.5px"><span class="ct cl">άβολη</span></div>
<div class="abs" style="left:264px;top:423.5px;width:60px;text-align:right"><span class="ct cr">6</span></div>
<div class="abs" style="left:365px;top:423.5px;width:60px;text-align:right"><span class="ct cr">3</span></div>
<div class="abs" style="left:466px;top:423.5px;width:60px;text-align:right"><span class="ct cr">25</span></div>
<div class="abs" style="left:623px;top:423.5px;width:60px;text-align:right"><span class="ct cr">2</span></div>
<div class="abs" style="left:32px;top:445.5px"><span class="ct cl">βαρετή</span></div>
<div class="abs" style="left:264px;top:445.5px;width:60px;text-align:right"><span class="ct cr">7</span></div>
<div class="abs" style="left:365px;top:445.5px;width:60px;text-align:right"><span class="ct cr">16</span></div>
<div class="abs" style="left:466px;top:445.5px;width:60px;text-align:right"><span class="ct cr">9</span></div>
<div class="abs" style="left:623px;top:445.5px;width:60px;text-align:right"><span class="ct cr">4</span></div>
<div class="abs" style="left:32px;top:467.5px"><span class="ct cl">κρύα</span></div>
<div class="abs" style="left:264px;top:467.5px;width:60px;text-align:right"><span class="ct cr">11</span></div>
<div class="abs" style="left:365px;top:467.5px;width:60px;text-align:right"><span class="ct cr">22</span></div>
<div class="abs" style="left:466px;top:467.5px;width:60px;text-align:right"><span class="ct cr">1</span></div>
<div class="abs" style="left:623px;top:467.5px;width:60px;text-align:right"><span class="ct cr">2</span></div>
<div class="abs" style="left:32px;top:489.5px"><span class="ct cl">σκιερή</span></div>
<div class="abs" style="left:264px;top:489.5px;width:60px;text-align:right"><span class="ct cr">5</span></div>
<div class="abs" style="left:365px;top:489.5px;width:60px;text-align:right"><span class="ct cr">16</span></div>
<div class="abs" style="left:466px;top:489.5px;width:60px;text-align:right"><span class="ct cr">14</span></div>
<div class="abs" style="left:623px;top:489.5px;width:60px;text-align:right"><span class="ct cr">1</span></div>
<div class="abs" style="left:32px;top:511.5px"><span class="ct cl">απάνεμη</span></div>
<div class="abs" style="left:264px;top:511.5px;width:60px;text-align:right"><span class="ct cr">4</span></div>
<div class="abs" style="left:365px;top:511.5px;width:60px;text-align:right"><span class="ct cr">13</span></div>
<div class="abs" style="left:466px;top:511.5px;width:60px;text-align:right"><span class="ct cr">17</span></div>
<div class="abs" style="left:623px;top:511.5px;width:60px;text-align:right"><span class="ct cr">2</span></div>
<svg class="abs" style="left:37px;top:549px" width="750" height="409" viewBox="37 549 750 409" font-family="'Liberation Sans', sans-serif">
<defs>
<linearGradient id="gbg" x1="0" y1="0" x2="1" y2="1"><stop offset="0" stop-color="#9db3f0"/><stop offset="1" stop-color="#f47f56"/></linearGradient>
<linearGradient id="gwall" x1="0" y1="0" x2="0" y2="1"><stop offset="0" stop-color="#8cb2ea"/><stop offset="1" stop-color="#d8a0ee"/></linearGradient>
<linearGradient id="gwallr" x1="0" y1="0" x2="0" y2="1"><stop offset="0" stop-color="#b0a6ea"/><stop offset="1" stop-color="#e896ea"/></linearGradient>
<linearGradient id="gmaskh" x1="0" y1="0" x2="1" y2="0"><stop offset="0" stop-color="#000"/><stop offset="1" stop-color="#fff"/></linearGradient>
<mask id="mh" maskUnits="userSpaceOnUse" x="101" y="607" width="517" height="207"><rect x="101" y="607" width="517" height="207" fill="url(#gmaskh)"/></mask>
<linearGradient id="gside" x1="0" y1="0" x2="0" y2="1"><stop offset="0" stop-color="#62658f"/><stop offset="1" stop-color="#8c6092"/></linearGradient>
<linearGradient id="gb0" x1="0" y1="0" x2="1" y2="0"><stop offset="0" stop-color="#0a3a78"/><stop offset="0.12" stop-color="#004a90"/><stop offset="0.85" stop-color="#004a90"/><stop offset="1" stop-color="#0a3a78"/></linearGradient>
<linearGradient id="gb1" x1="0" y1="0" x2="1" y2="0"><stop offset="0" stop-color="#c03410"/><stop offset="0.12" stop-color="#ff4510"/><stop offset="0.85" stop-color="#ff4510"/><stop offset="1" stop-color="#c03410"/></linearGradient>
<linearGradient id="gb2" x1="0" y1="0" x2="1" y2="0"><stop offset="0" stop-color="#d8b418"/><stop offset="0.12" stop-color="#ffde28"/><stop offset="0.85" stop-color="#ffde28"/><stop offset="1" stop-color="#d8b418"/></linearGradient>
<linearGradient id="gb3" x1="0" y1="0" x2="1" y2="0"><stop offset="0" stop-color="#478418"/><stop offset="0.12" stop-color="#5aa022"/><stop offset="0.85" stop-color="#5aa022"/><stop offset="1" stop-color="#478418"/></linearGradient>
</defs>
<rect x="37" y="549" width="750" height="409" fill="url(#gbg)"/>
<rect x="101" y="607.5" width="517" height="206.8" fill="url(#gwall)"/>
<rect x="101" y="607.5" width="517" height="206.8" fill="url(#gwallr)" mask="url(#mh)"/>
<polygon points="91,612 101,607.5 101,814.3 91,818.6" fill="url(#gside)"/>
<polygon points="91,818.6 101,814.3 618,814.3 608,818.6" fill="#847c86"/>
<line x1="101" y1="778.75" x2="618" y2="778.75" stroke="#b3abb3" stroke-opacity="0.8" stroke-width="1"/>
<line x1="91" y1="783.45" x2="101" y2="778.75" stroke="#c9c3c6" stroke-width="1"/>
<line x1="101" y1="744.5" x2="618" y2="744.5" stroke="#b3abb3" stroke-opacity="0.8" stroke-width="1"/>
<line x1="91" y1="749.2" x2="101" y2="744.5" stroke="#c9c3c6" stroke-width="1"/>
<line x1="101" y1="710.25" x2="618" y2="710.25" stroke="#b3abb3" stroke-opacity="0.8" stroke-width="1"/>
<line x1="91" y1="714.95" x2="101" y2="710.25" stroke="#c9c3c6" stroke-width="1"/>
<line x1="101" y1="676" x2="618" y2="676" stroke="#b3abb3" stroke-opacity="0.8" stroke-width="1"/>
<line x1="91" y1="680.7" x2="101" y2="676" stroke="#c9c3c6" stroke-width="1"/>
<line x1="101" y1="641.75" x2="618" y2="641.75" stroke="#b3abb3" stroke-opacity="0.8" stroke-width="1"/>
<line x1="91" y1="646.45" x2="101" y2="641.75" stroke="#c9c3c6" stroke-width="1"/>
<line x1="101" y1="607.5" x2="618" y2="607.5" stroke="#b3abb3" stroke-opacity="0.8" stroke-width="1"/>
<line x1="91" y1="612.2" x2="101" y2="607.5" stroke="#c9c3c6" stroke-width="1"/>
<line x1="618" y1="607.5" x2="618" y2="813" stroke="#b3abb3" stroke-width="1"/>
<text x="79" y="825.8" font-size="16" text-anchor="end" fill="#000">0</text>
<text x="79" y="791.22" font-size="16" text-anchor="end" fill="#000">5</text>
<text x="79" y="756.64" font-size="16" text-anchor="end" fill="#000">10</text>
<text x="79" y="722.06" font-size="16" text-anchor="end" fill="#000">15</text>
<text x="79" y="687.48" font-size="16" text-anchor="end" fill="#000">20</text>
<text x="79" y="652.9" font-size="16" text-anchor="end" fill="#000">25</text>
<text x="79" y="618.32" font-size="16" text-anchor="end" fill="#000">30</text>
<polygon points="106.9,739.9 108,740.5 108,816.4 106.9,817" fill="#0a3a78"/>
<rect x="98.75" y="741.1" width="8.15" height="75.9" fill="url(#gb0)"/>
<polygon points="98.75,741.9 99.35,740.7 108,739.5 107.5,741.4" fill="#003060"/>
<polygon points="115.05,684.7 116.15,685.3 116.15,816.4 115.05,817" fill="#c03410"/>
<rect x="106.9" y="685.9" width="8.15" height="131.1" fill="url(#gb1)"/>
<polygon points="106.9,686.7 107.5,685.5 116.15,684.3 115.65,686.2" fill="#8a2a10"/>
<polygon points="123.2,795.1 124.3,795.7 124.3,816.4 123.2,817" fill="#d8b418"/>
<rect x="115.05" y="796.3" width="8.15" height="20.7" fill="url(#gb2)"/>
<polygon points="115.05,797.1 115.65,795.9 124.3,794.7 123.8,796.6" fill="#b89a10"/>
<polygon points="131.35,802 132.45,802.6 132.45,816.4 131.35,817" fill="#478418"/>
<rect x="123.2" y="803.2" width="8.15" height="13.8" fill="url(#gb3)"/>
<polygon points="123.2,804 123.8,802.8 132.45,801.6 131.95,803.5" fill="#3a6a14"/>
<polygon points="146.65,733 147.75,733.6 147.75,816.4 146.65,817" fill="#0a3a78"/>
<rect x="138.5" y="734.2" width="8.15" height="82.8" fill="url(#gb0)"/>
<polygon points="138.5,735 139.1,733.8 147.75,732.6 147.25,734.5" fill="#003060"/>
<polygon points="154.8,677.8 155.9,678.4 155.9,816.4 154.8,817" fill="#c03410"/>
<rect x="146.65" y="679" width="8.15" height="138" fill="url(#gb1)"/>
<polygon points="146.65,679.8 147.25,678.6 155.9,677.4 155.4,679.3" fill="#8a2a10"/>
<polygon points="162.95,795.1 164.05,795.7 164.05,816.4 162.95,817" fill="#d8b418"/>
<rect x="154.8" y="796.3" width="8.15" height="20.7" fill="url(#gb2)"/>
<polygon points="154.8,797.1 155.4,795.9 164.05,794.7 163.55,796.6" fill="#b89a10"/>
<polygon points="171.1,808.9 172.2,809.5 172.2,816.4 171.1,817" fill="#478418"/>
<rect x="162.95" y="810.1" width="8.15" height="6.9" fill="url(#gb3)"/>
<polygon points="162.95,810.9 163.55,809.7 172.2,808.5 171.7,810.4" fill="#3a6a14"/>
<polygon points="186.4,705.4 187.5,706 187.5,816.4 186.4,817" fill="#0a3a78"/>
<rect x="178.25" y="706.6" width="8.15" height="110.4" fill="url(#gb0)"/>
<polygon points="178.25,707.4 178.85,706.2 187.5,705 187,706.9" fill="#003060"/>
<polygon points="194.55,733 195.65,733.6 195.65,816.4 194.55,817" fill="#c03410"/>
<rect x="186.4" y="734.2" width="8.15" height="82.8" fill="url(#gb1)"/>
<polygon points="186.4,735 187,733.8 195.65,732.6 195.15,734.5" fill="#8a2a10"/>
<polygon points="202.7,767.5 203.8,768.1 203.8,816.4 202.7,817" fill="#d8b418"/>
<rect x="194.55" y="768.7" width="8.15" height="48.3" fill="url(#gb2)"/>
<polygon points="194.55,769.5 195.15,768.3 203.8,767.1 203.3,769" fill="#b89a10"/>
<polygon points="210.85,808.9 211.95,809.5 211.95,816.4 210.85,817" fill="#478418"/>
<rect x="202.7" y="810.1" width="8.15" height="6.9" fill="url(#gb3)"/>
<polygon points="202.7,810.9 203.3,809.7 211.95,808.5 211.45,810.4" fill="#3a6a14"/>
<polygon points="226.15,739.9 227.25,740.5 227.25,816.4 226.15,817" fill="#0a3a78"/>
<rect x="218" y="741.1" width="8.15" height="75.9" fill="url(#gb0)"/>
<polygon points="218,741.9 218.6,740.7 227.25,739.5 226.75,741.4" fill="#003060"/>
<polygon points="234.3,677.8 235.4,678.4 235.4,816.4 234.3,817" fill="#c03410"/>
<rect x="226.15" y="679" width="8.15" height="138" fill="url(#gb1)"/>
<polygon points="226.15,679.8 226.75,678.6 235.4,677.4 234.9,679.3" fill="#8a2a10"/>
<polygon points="242.45,808.9 243.55,809.5 243.55,816.4 242.45,817" fill="#d8b418"/>
<rect x="234.3" y="810.1" width="8.15" height="6.9" fill="url(#gb2)"/>
<polygon points="234.3,810.9 234.9,809.7 243.55,808.5 243.05,810.4" fill="#b89a10"/>
<polygon points="250.6,795.1 251.7,795.7 251.7,816.4 250.6,817" fill="#478418"/>
<rect x="242.45" y="796.3" width="8.15" height="20.7" fill="url(#gb3)"/>
<polygon points="242.45,797.1 243.05,795.9 251.7,794.7 251.2,796.6" fill="#3a6a14"/>
<polygon points="265.9,767.5 267,768.1 267,816.4 265.9,817" fill="#0a3a78"/>
<rect x="257.75" y="768.7" width="8.15" height="48.3" fill="url(#gb0)"/>
<polygon points="257.75,769.5 258.35,768.3 267,767.1 266.5,769" fill="#003060"/>
<polygon points="274.05,650.2 275.15,650.8 275.15,816.4 274.05,817" fill="#c03410"/>
<rect x="265.9" y="651.4" width="8.15" height="165.6" fill="url(#gb1)"/>
<polygon points="265.9,652.2 266.5,651 275.15,649.8 274.65,651.7" fill="#8a2a10"/>
<polygon points="282.2,788.2 283.3,788.8 283.3,816.4 282.2,817" fill="#d8b418"/>
<rect x="274.05" y="789.4" width="8.15" height="27.6" fill="url(#gb2)"/>
<polygon points="274.05,790.2 274.65,789 283.3,787.8 282.8,789.7" fill="#b89a10"/>
<polygon points="290.35,808.9 291.45,809.5 291.45,816.4 290.35,817" fill="#478418"/>
<rect x="282.2" y="810.1" width="8.15" height="6.9" fill="url(#gb3)"/>
<polygon points="282.2,810.9 282.8,809.7 291.45,808.5 290.95,810.4" fill="#3a6a14"/>
<polygon points="305.65,788.2 306.75,788.8 306.75,816.4 305.65,817" fill="#0a3a78"/>
<rect x="297.5" y="789.4" width="8.15" height="27.6" fill="url(#gb0)"/>
<polygon points="297.5,790.2 298.1,789 306.75,787.8 306.25,789.7" fill="#003060"/>
<polygon points="313.8,753.7 314.9,754.3 314.9,816.4 313.8,817" fill="#c03410"/>
<rect x="305.65" y="754.9" width="8.15" height="62.1" fill="url(#gb1)"/>
<polygon points="305.65,755.7 306.25,754.5 314.9,753.3 314.4,755.2" fill="#8a2a10"/>
<polygon points="321.95,670.9 323.05,671.5 323.05,816.4 321.95,817" fill="#d8b418"/>
<rect x="313.8" y="672.1" width="8.15" height="144.9" fill="url(#gb2)"/>
<polygon points="313.8,672.9 314.4,671.7 323.05,670.5 322.55,672.4" fill="#b89a10"/>
<polygon points="330.1,795.1 331.2,795.7 331.2,816.4 330.1,817" fill="#478418"/>
<rect x="321.95" y="796.3" width="8.15" height="20.7" fill="url(#gb3)"/>
<polygon points="321.95,797.1 322.55,795.9 331.2,794.7 330.7,796.6" fill="#3a6a14"/>
<polygon points="345.4,802 346.5,802.6 346.5,816.4 345.4,817" fill="#0a3a78"/>
<rect x="337.25" y="803.2" width="8.15" height="13.8" fill="url(#gb0)"/>
<polygon points="337.25,804 337.85,802.8 346.5,801.6 346,803.5" fill="#003060"/>
<polygon points="353.55,698.5 354.65,699.1 354.65,816.4 353.55,817" fill="#c03410"/>
<rect x="345.4" y="699.7" width="8.15" height="117.3" fill="url(#gb1)"/>
<polygon points="345.4,700.5 346,699.3 354.65,698.1 354.15,700" fill="#8a2a10"/>
<polygon points="361.7,712.3 362.8,712.9 362.8,816.4 361.7,817" fill="#d8b418"/>
<rect x="353.55" y="713.5" width="8.15" height="103.5" fill="url(#gb2)"/>
<polygon points="353.55,714.3 354.15,713.1 362.8,711.9 362.3,713.8" fill="#b89a10"/>
<polygon points="369.85,795.1 370.95,795.7 370.95,816.4 369.85,817" fill="#478418"/>
<rect x="361.7" y="796.3" width="8.15" height="20.7" fill="url(#gb3)"/>
<polygon points="361.7,797.1 362.3,795.9 370.95,794.7 370.45,796.6" fill="#3a6a14"/>
<polygon points="385.15,802 386.25,802.6 386.25,816.4 385.15,817" fill="#0a3a78"/>
<rect x="377" y="803.2" width="8.15" height="13.8" fill="url(#gb0)"/>
<polygon points="377,804 377.6,802.8 386.25,801.6 385.75,803.5" fill="#003060"/>
<polygon points="393.3,774.4 394.4,775 394.4,816.4 393.3,817" fill="#c03410"/>
<rect x="385.15" y="775.6" width="8.15" height="41.4" fill="url(#gb1)"/>
<polygon points="385.15,776.4 385.75,775.2 394.4,774 393.9,775.9" fill="#8a2a10"/>
<polygon points="401.45,636.4 402.55,637 402.55,816.4 401.45,817" fill="#d8b418"/>
<rect x="393.3" y="637.6" width="8.15" height="179.4" fill="url(#gb2)"/>
<polygon points="393.3,638.4 393.9,637.2 402.55,636 402.05,637.9" fill="#b89a10"/>
<polygon points="409.6,795.1 410.7,795.7 410.7,816.4 409.6,817" fill="#478418"/>
<rect x="401.45" y="796.3" width="8.15" height="20.7" fill="url(#gb3)"/>
<polygon points="401.45,797.1 402.05,795.9 410.7,794.7 410.2,796.6" fill="#3a6a14"/>
<polygon points="424.9,774.4 426,775 426,816.4 424.9,817" fill="#0a3a78"/>
<rect x="416.75" y="775.6" width="8.15" height="41.4" fill="url(#gb0)"/>
<polygon points="416.75,776.4 417.35,775.2 426,774 425.5,775.9" fill="#003060"/>
<polygon points="433.05,795.1 434.15,795.7 434.15,816.4 433.05,817" fill="#c03410"/>
<rect x="424.9" y="796.3" width="8.15" height="20.7" fill="url(#gb1)"/>
<polygon points="424.9,797.1 425.5,795.9 434.15,794.7 433.65,796.6" fill="#8a2a10"/>
<polygon points="441.2,643.3 442.3,643.9 442.3,816.4 441.2,817" fill="#d8b418"/>
<rect x="433.05" y="644.5" width="8.15" height="172.5" fill="url(#gb2)"/>
<polygon points="433.05,645.3 433.65,644.1 442.3,642.9 441.8,644.8" fill="#b89a10"/>
<polygon points="449.35,802 450.45,802.6 450.45,816.4 449.35,817" fill="#478418"/>
<rect x="441.2" y="803.2" width="8.15" height="13.8" fill="url(#gb3)"/>
<polygon points="441.2,804 441.8,802.8 450.45,801.6 449.95,803.5" fill="#3a6a14"/>
<polygon points="464.65,767.5 465.75,768.1 465.75,816.4 464.65,817" fill="#0a3a78"/>
<rect x="456.5" y="768.7" width="8.15" height="48.3" fill="url(#gb0)"/>
<polygon points="456.5,769.5 457.1,768.3 465.75,767.1 465.25,769" fill="#003060"/>
<polygon points="472.8,705.4 473.9,706 473.9,816.4 472.8,817" fill="#c03410"/>
<rect x="464.65" y="706.6" width="8.15" height="110.4" fill="url(#gb1)"/>
<polygon points="464.65,707.4 465.25,706.2 473.9,705 473.4,706.9" fill="#8a2a10"/>
<polygon points="480.95,753.7 482.05,754.3 482.05,816.4 480.95,817" fill="#d8b418"/>
<rect x="472.8" y="754.9" width="8.15" height="62.1" fill="url(#gb2)"/>
<polygon points="472.8,755.7 473.4,754.5 482.05,753.3 481.55,755.2" fill="#b89a10"/>
<polygon points="489.1,788.2 490.2,788.8 490.2,816.4 489.1,817" fill="#478418"/>
<rect x="480.95" y="789.4" width="8.15" height="27.6" fill="url(#gb3)"/>
<polygon points="480.95,790.2 481.55,789 490.2,787.8 489.7,789.7" fill="#3a6a14"/>
<polygon points="504.4,739.9 505.5,740.5 505.5,816.4 504.4,817" fill="#0a3a78"/>
<rect x="496.25" y="741.1" width="8.15" height="75.9" fill="url(#gb0)"/>
<polygon points="496.25,741.9 496.85,740.7 505.5,739.5 505,741.4" fill="#003060"/>
<polygon points="512.55,664 513.65,664.6 513.65,816.4 512.55,817" fill="#c03410"/>
<rect x="504.4" y="665.2" width="8.15" height="151.8" fill="url(#gb1)"/>
<polygon points="504.4,666 505,664.8 513.65,663.6 513.15,665.5" fill="#8a2a10"/>
<polygon points="520.7,808.9 521.8,809.5 521.8,816.4 520.7,817" fill="#d8b418"/>
<rect x="512.55" y="810.1" width="8.15" height="6.9" fill="url(#gb2)"/>
<polygon points="512.55,810.9 513.15,809.7 521.8,808.5 521.3,810.4" fill="#b89a10"/>
<polygon points="528.85,802 529.95,802.6 529.95,816.4 528.85,817" fill="#478418"/>
<rect x="520.7" y="803.2" width="8.15" height="13.8" fill="url(#gb3)"/>
<polygon points="520.7,804 521.3,802.8 529.95,801.6 529.45,803.5" fill="#3a6a14"/>
<polygon points="544.15,781.3 545.25,781.9 545.25,816.4 544.15,817" fill="#0a3a78"/>
<rect x="536" y="782.5" width="8.15" height="34.5" fill="url(#gb0)"/>
<polygon points="536,783.3 536.6,782.1 545.25,780.9 544.75,782.8" fill="#003060"/>
<polygon points="552.3,705.4 553.4,706 553.4,816.4 552.3,817" fill="#c03410"/>
<rect x="544.15" y="706.6" width="8.15" height="110.4" fill="url(#gb1)"/>
<polygon points="544.15,707.4 544.75,706.2 553.4,705 552.9,706.9" fill="#8a2a10"/>
<polygon points="560.45,719.2 561.55,719.8 561.55,816.4 560.45,817" fill="#d8b418"/>
<rect x="552.3" y="720.4" width="8.15" height="96.6" fill="url(#gb2)"/>
<polygon points="552.3,721.2 552.9,720 561.55,718.8 561.05,720.7" fill="#b89a10"/>
<polygon points="568.6,808.9 569.7,809.5 569.7,816.4 568.6,817" fill="#478418"/>
<rect x="560.45" y="810.1" width="8.15" height="6.9" fill="url(#gb3)"/>
<polygon points="560.45,810.9 561.05,809.7 569.7,808.5 569.2,810.4" fill="#3a6a14"/>
<polygon points="583.9,788.2 585,788.8 585,816.4 583.9,817" fill="#0a3a78"/>
<rect x="575.75" y="789.4" width="8.15" height="27.6" fill="url(#gb0)"/>
<polygon points="575.75,790.2 576.35,789 585,787.8 584.5,789.7" fill="#003060"/>
<polygon points="592.05,726.1 593.15,726.7 593.15,816.4 592.05,817" fill="#c03410"/>
<rect x="583.9" y="727.3" width="8.15" height="89.7" fill="url(#gb1)"/>
<polygon points="583.9,728.1 584.5,726.9 593.15,725.7 592.65,727.6" fill="#8a2a10"/>
<polygon points="600.2,698.5 601.3,699.1 601.3,816.4 600.2,817" fill="#d8b418"/>
<rect x="592.05" y="699.7" width="8.15" height="117.3" fill="url(#gb2)"/>
<polygon points="592.05,700.5 592.65,699.3 601.3,698.1 600.8,700" fill="#b89a10"/>
<polygon points="608.35,802 609.45,802.6 609.45,816.4 608.35,817" fill="#478418"/>
<rect x="600.2" y="803.2" width="8.15" height="13.8" fill="url(#gb3)"/>
<polygon points="600.2,804 600.8,802.8 609.45,801.6 608.95,803.5" fill="#3a6a14"/>
<text transform="translate(116.05,841) rotate(-45)" font-size="16" text-anchor="end" letter-spacing="0.4" fill="#000">ελκυστική</text>
<text transform="translate(155.8,841) rotate(-45)" font-size="16" text-anchor="end" letter-spacing="0.4" fill="#000">φιλική</text>
<text transform="translate(195.55,841) rotate(-45)" font-size="16" text-anchor="end" letter-spacing="0.4" fill="#000">ασφαλής</text>
<text transform="translate(235.3,841) rotate(-45)" font-size="16" text-anchor="end" letter-spacing="0.4" fill="#000">καθαρή</text>
<text transform="translate(275.05,841) rotate(-45)" font-size="16" text-anchor="end" letter-spacing="0.4" fill="#000">πράσινη (βλάστηση)</text>
<text transform="translate(314.8,841) rotate(-45)" font-size="16" text-anchor="end" letter-spacing="0.4" fill="#000">ήσυχη</text>
<text transform="translate(354.55,841) rotate(-45)" font-size="16" text-anchor="end" letter-spacing="0.4" fill="#000">φτωχική</text>
<text transform="translate(394.3,841) rotate(-45)" font-size="16" text-anchor="end" letter-spacing="0.4" fill="#000">στενάχωρη</text>
<text transform="translate(434.05,841) rotate(-45)" font-size="16" text-anchor="end" letter-spacing="0.4" fill="#000">άβολη</text>
<text transform="translate(473.8,841) rotate(-45)" font-size="16" text-anchor="end" letter-spacing="0.4" fill="#000">βαρετή</text>
<text transform="translate(513.55,841) rotate(-45)" font-size="16" text-anchor="end" letter-spacing="0.4" fill="#000">κρύα</text>
<text transform="translate(553.3,841) rotate(-45)" font-size="16" text-anchor="end" letter-spacing="0.4" fill="#000">σκιερή</text>
<text transform="translate(593.05,841) rotate(-45)" font-size="16" text-anchor="end" letter-spacing="0.4" fill="#000">απάνεμη</text>
<text x="412.7" y="582" font-size="19.6" text-anchor="middle" letter-spacing="0.875" fill="#000">Οι εντυπώσεις μας για την αυλή (με ένα επίθετο)</text>
<rect x="644" y="715" width="10" height="10" fill="#004a90"/>
<text x="658.5" y="725" font-size="16" letter-spacing="0.22" fill="#000">πολύ</text>
<rect x="644" y="737.3" width="10" height="10" fill="#ff4510"/>
<text x="658.5" y="747.3" font-size="16" letter-spacing="0.22" fill="#000">λίγο</text>
<rect x="644" y="759.7" width="10" height="10" fill="#ffde28"/>
<text x="658.5" y="769.7" font-size="16" letter-spacing="0.22" fill="#000">καθόλου</text>
<rect x="644" y="782" width="10" height="10" fill="#5aa022"/>
<text x="658.5" y="792" font-size="16" letter-spacing="0.22" fill="#000">δεν απάντησαν</text>
</svg>
<div class="abs" style="left:785px;top:641px;width:20px;height:23px;border:2px solid #000;box-sizing:border-box"></div>
</body></html>
